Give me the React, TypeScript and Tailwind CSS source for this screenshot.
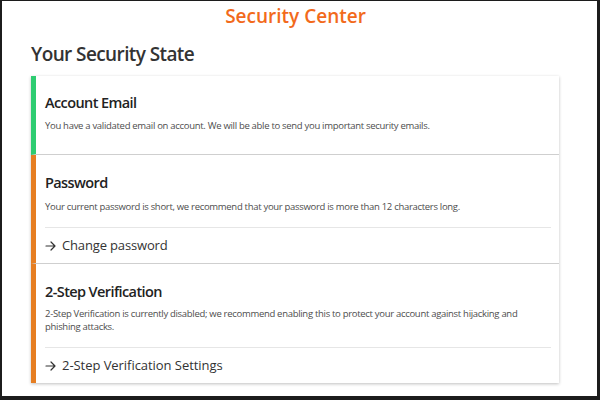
function Arrow() {
  return (
    <svg width="11" height="10" viewBox="0 0 11 10" className="mr-[6px] shrink-0" fill="none" stroke="#333" strokeWidth="1.2" strokeLinecap="round" strokeLinejoin="round">
      <path d="M1 5 H10 M6 1 L10 5 L6 9" />
    </svg>
  );
}

export default function App() {
  return (
    <div
      className="w-[600px] h-[400px] bg-white border-l-2 border-t border-r-[3px] border-b-[4px] border-[#1c1c1c] overflow-hidden"
      style={{ fontFamily: '"Open Sans", "Noto Sans", sans-serif' }}
    >
      <div className="text-center text-[19px] leading-[26px] font-semibold text-[#f26a1b] pt-[2px] pr-[8px]">
        Security Center
      </div>
      <div className="pl-[29px] pr-[38px]">
        <h1 className="mt-[12px] text-[19px] leading-[26px] font-semibold text-[#333] tracking-[-0.6px]">Your Security State</h1>
        <div className="mt-[9px] bg-white shadow-[0_1px_3px_rgba(0,0,0,0.25)]">
          <div className="border-l-[5px] border-[#2ecc71] border-b border-b-[#cfcfcf] pl-[9px] pr-[8px] pt-[17px] pb-[22px]">
            <div className="text-[14.5px] leading-[20px] font-semibold text-[#222] tracking-[-0.6px]">Account Email</div>
            <div className="mt-[6px] text-[9.5px] leading-[13px] text-[#4d4d4d] tracking-[-0.3px]">
              You have a validated email on account. We will be able to send you important security emails.
            </div>
          </div>
          <div className="border-l-[5px] border-[#e67e22] border-b border-b-[#cfcfcf] pl-[9px] pr-[8px] pt-[18px]">
            <div className="text-[14.5px] leading-[20px] font-semibold text-[#222] tracking-[-0.6px]">Password</div>
            <div className="mt-[7px] text-[9.5px] leading-[13px] text-[#4d4d4d] pb-[14px] border-b border-[#e6e6e6] tracking-[-0.3px]">
              Your current password is short, we recommend that your password is more than 12 characters long.
            </div>
            <div className="h-[35px] flex items-center text-[13px] text-[#333] tracking-[-0.15px]">
              <Arrow />Change password
            </div>
          </div>
          <div className="border-l-[5px] border-[#e67e22] pl-[9px] pr-[8px] pt-[18px]">
            <div className="text-[14.5px] leading-[20px] font-semibold text-[#222] tracking-[-0.6px]">2-Step Verification</div>
            <div className="mt-[5px] text-[9.5px] leading-[13px] text-[#4d4d4d] pb-[14px] border-b border-[#e6e6e6] tracking-[-0.3px]">
              2-Step Verification is currently disabled; we recommend enabling this to protect your account against hijacking and phishing attacks.
            </div>
            <div className="h-[35px] flex items-center text-[13px] text-[#333] tracking-[-0.05px]">
              <Arrow />2-Step Verification Settings
            </div>
          </div>
        </div>
      </div>
    </div>
  );
}
